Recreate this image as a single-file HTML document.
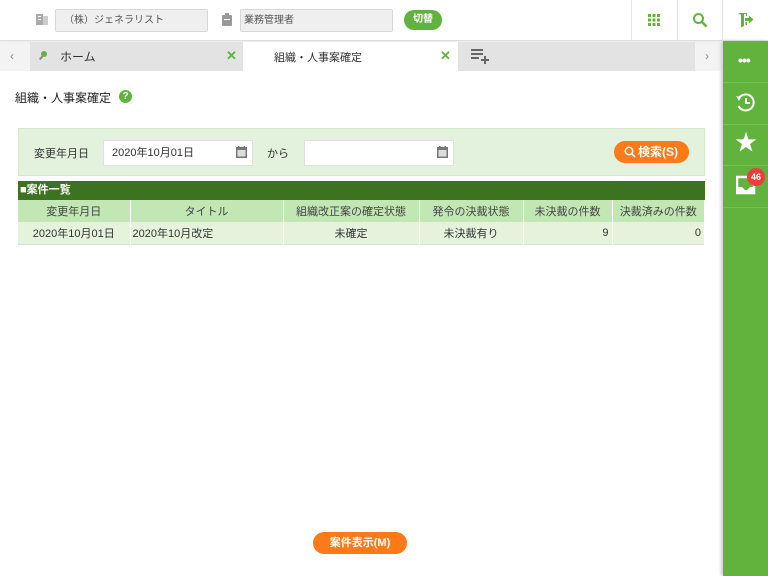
<!DOCTYPE html>
<html><head><meta charset="utf-8"><style>
*{box-sizing:border-box;margin:0;padding:0}
body{width:768px;height:576px;position:relative;overflow:hidden;background:#fff;font-family:"Liberation Sans","Noto Sans CJK JP",sans-serif;font-size:12px;color:#333}
.a{position:absolute}
.inp{position:absolute;background:#efefef;border:1px solid #d8d8d8;border-radius:2px;font-size:10px;color:#555;line-height:21px}
.sb{position:absolute;left:723px;width:45px;background:#62b33d}
.sep{position:absolute;left:723px;width:45px;height:1px;background:#75c050}
table{border-collapse:collapse;position:absolute;left:18px;top:200px;width:687px;font-size:11px}
td{height:22px;border-right:1px solid #fff;padding:0 3px}
</style></head><body>
<div class="a" style="left:0;top:0;width:768px;height:41px;border-bottom:1px solid #ddd;box-shadow:0 1px 2px #e5e5e5"></div>
<svg class="a" style="left:36px;top:13px" width="12" height="13"><rect x="0" y="1" width="7" height="11" fill="#aaa"/><rect x="7" y="3" width="5" height="9" fill="#ccc"/><rect x="2" y="3" width="3" height="1" fill="#fff"/><rect x="2" y="6" width="3" height="1" fill="#fff"/></svg>
<div class="inp" style="left:55px;top:9px;width:153px;height:23px;padding-left:8px">（株）ジェネラリスト</div>
<svg class="a" style="left:222px;top:13px" width="10" height="13"><rect x="0" y="2" width="10" height="11" rx="1" fill="#999"/><rect x="3" y="0" width="4" height="3" fill="#999"/><rect x="2" y="6" width="6" height="1" fill="#fff"/></svg>
<div class="inp" style="left:240px;top:9px;width:153px;height:23px;padding-left:3px">業務管理者</div>
<div class="a" style="left:404px;top:10px;width:38px;height:20px;border-radius:10px;background:#62b33d;color:#fff;font-size:10px;font-weight:bold;text-align:center;line-height:20px">切替</div>
<div class="a" style="left:631px;top:0;width:1px;height:40px;background:#e5e5e5"></div>
<div class="a" style="left:677px;top:0;width:1px;height:40px;background:#e5e5e5"></div>
<div class="a" style="left:722px;top:0;width:1px;height:40px;background:#e5e5e5"></div>
<svg class="a" style="left:648px;top:14px" width="12" height="12" fill="#62b33d"><rect x="0" y="0" width="3" height="3"/><rect x="4.5" y="0" width="3" height="3"/><rect x="9" y="0" width="3" height="3"/><rect x="0" y="4.5" width="3" height="3"/><rect x="4.5" y="4.5" width="3" height="3"/><rect x="9" y="4.5" width="3" height="3"/><rect x="0" y="9" width="3" height="3"/><rect x="4.5" y="9" width="3" height="3"/><rect x="9" y="9" width="3" height="3"/></svg>
<svg class="a" style="left:692px;top:12px" width="16" height="16"><circle cx="6.5" cy="6.5" r="4.5" fill="none" stroke="#62b33d" stroke-width="2"/><path d="M10 10l4.5 4.5" stroke="#62b33d" stroke-width="2.5"/></svg>
<svg class="a" style="left:738px;top:12px" width="16" height="16" fill="#62b33d"><path d="M0 1h6v13l-3 1.5V3z"/><path d="M3 1h6v3H8V2H4z"/><path d="M7 6h4V3.5l4.5 4-4.5 4V9H7z"/><rect x="7.5" y="10" width="1.5" height="3"/></svg>
<div class="a" style="left:0;top:42px;width:722px;height:29px;background:#f3f3f3"></div>
<div class="a" style="left:10px;top:49px;color:#888;font-size:12px">‹</div>
<div class="a" style="left:30px;top:42px;width:213px;height:29px;background:#e3e3e3"></div>
<div class="a" style="left:41px;top:51px;width:6px;height:6px;border-radius:50%;background:#62b33d"></div>
<div class="a" style="left:40px;top:56px;width:2px;height:4px;background:#888;transform:rotate(40deg)"></div>
<div class="a" style="left:60px;top:48px;font-size:12px;color:#333">ホーム</div>
<div class="a" style="left:226px;top:48px;font-size:13px;font-weight:bold;color:#62b33d">✕</div>
<div class="a" style="left:243px;top:42px;width:215px;height:29px;background:#fff"></div>
<div class="a" style="left:274px;top:49px;font-size:11px">組織・人事案確定</div>
<div class="a" style="left:440px;top:48px;font-size:13px;font-weight:bold;color:#62b33d">✕</div>
<div class="a" style="left:458px;top:42px;width:237px;height:29px;background:#e3e3e3"></div>
<svg class="a" style="left:471px;top:49px" width="18" height="15" fill="#666"><rect x="0" y="0" width="12" height="2"/><rect x="0" y="4" width="12" height="2"/><rect x="0" y="8" width="8" height="2"/><rect x="10" y="10" width="8" height="2"/><rect x="13" y="7" width="2" height="8"/></svg>
<div class="a" style="left:705px;top:49px;color:#888;font-size:12px">›</div>
<div class="sb" style="top:41px;height:535px;box-shadow:-2px 0 3px #ccc"></div>
<div class="sep" style="top:82px"></div><div class="sep" style="top:124px"></div><div class="sep" style="top:165px"></div><div class="sep" style="top:207px"></div>
<div class="a" style="left:738px;top:52px;color:#fff;font-size:14px;font-weight:bold;letter-spacing:-1px">•••</div>
<svg class="a" style="left:735px;top:92px" width="22" height="22"><path d="M4 6A8 8 0 1 1 3.5 14" fill="none" stroke="#fff" stroke-width="2"/><path d="M1 4l5 1-2 4z" fill="#fff"/><path d="M11 6v5h4" fill="none" stroke="#fff" stroke-width="2"/></svg>
<div class="a" style="left:735px;top:131px;color:#fff;font-size:22px;line-height:24px">★</div>
<svg class="a" style="left:736px;top:175px" width="20" height="20"><path d="M1 2h17v16H1z" fill="none" stroke="#fff" stroke-width="2.5"/><path d="M1 12h5l3 3h2l3-3h5v6H1z" fill="#fff"/></svg>
<div class="a" style="left:747px;top:168px;width:18px;height:18px;border-radius:50%;background:#ee3c3c;color:#fff;font-size:9px;font-weight:bold;text-align:center;line-height:18px">46</div>
<div class="a" style="left:15px;top:89px;font-size:12px;color:#222">組織・人事案確定</div>
<div class="a" style="left:119px;top:90px;width:13px;height:13px;border-radius:50%;background:#62b33d;color:#fff;font-size:10px;font-weight:bold;text-align:center;line-height:13px">?</div>
<div class="a" style="left:18px;top:128px;width:687px;height:48px;background:#e2f2dc;border:1px solid #d5e9cc"></div>
<div class="a" style="left:34px;top:145px;font-size:11px">変更年月日</div>
<div class="a" style="left:103px;top:140px;width:150px;height:26px;background:#fff;border:1px solid #e0e0e0;padding:0 8px;line-height:24px;font-size:11px">2020年10月01日</div>
<div class="a" style="left:267px;top:145px;font-size:11px">から</div>
<div class="a" style="left:304px;top:140px;width:150px;height:26px;background:#fff;border:1px solid #e0e0e0"></div>
<svg class="a" style="left:236px;top:146px" width="11" height="12"><rect x="0" y="1" width="11" height="11" fill="#777"/><rect x="1.5" y="4" width="8" height="6.5" fill="#ddd"/><rect x="2" y="0" width="1.5" height="3" fill="#777"/><rect x="7.5" y="0" width="1.5" height="3" fill="#777"/></svg>
<svg class="a" style="left:437px;top:146px" width="11" height="12"><rect x="0" y="1" width="11" height="11" fill="#777"/><rect x="1.5" y="4" width="8" height="6.5" fill="#ddd"/><rect x="2" y="0" width="1.5" height="3" fill="#777"/><rect x="7.5" y="0" width="1.5" height="3" fill="#777"/></svg>
<div class="a" style="left:614px;top:141px;width:75px;height:22px;border-radius:11px;background:#fd7a1a;color:#fff;font-size:12px;font-weight:bold;line-height:22px;padding-left:24px">検索(S)</div>
<svg class="a" style="left:624px;top:146px" width="12" height="12"><circle cx="5" cy="5" r="3.7" fill="none" stroke="#fff" stroke-width="1.5"/><path d="M7.5 7.5l3.5 3.5" stroke="#fff" stroke-width="1.8"/></svg>
<div class="a" style="left:18px;top:181px;width:687px;height:19px;background:#3c7220;color:#fff;font-size:11px;font-weight:bold;line-height:19px;padding-left:2px">■案件一覧</div>
<table>
<tr style="background:#c2e6b4;text-align:center;color:#444"><td style="width:112px">変更年月日</td><td style="width:153px">タイトル</td><td style="width:136px">組織改正案の確定状態</td><td style="width:104px">発令の決裁状態</td><td style="width:89px">未決裁の件数</td><td>決裁済みの件数</td></tr>
<tr style="background:#e5f3dd;color:#333;border-bottom:1px solid #d5e3cd"><td style="text-align:center">2020年10月01日</td><td style="padding-left:2px">2020年10月改定</td><td style="text-align:center">未確定</td><td style="text-align:center">未決裁有り</td><td style="text-align:right">9</td><td style="text-align:right">0</td></tr>
</table>
<div class="a" style="left:313px;top:532px;width:94px;height:22px;border-radius:11px;background:#fd7a1a;color:#fff;font-size:11px;font-weight:bold;text-align:center;line-height:22px">案件表示(M)</div>
</body></html>
